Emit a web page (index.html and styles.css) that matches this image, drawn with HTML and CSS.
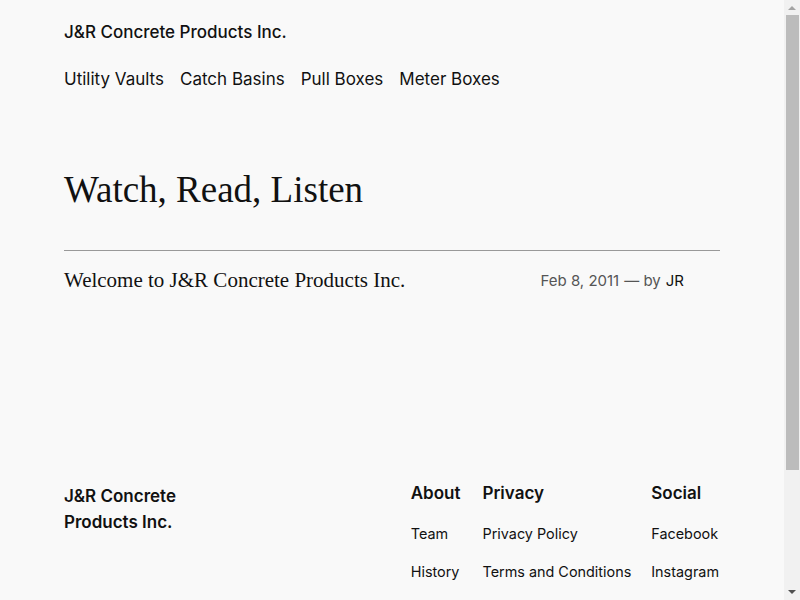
FILE: index.html
```
<!DOCTYPE html>
<html lang="en">
<head>
    <meta charset="UTF-8">
    <meta name="viewport" content="width=device-width, initial-scale=1.0">
    <title>Watch, Read, Listen – J&amp;R Concrete Products Inc.</title>
    <link rel="stylesheet" href="styles.css">
</head>
<body>
    <header class="site-header">
        <p class="site-title"><a href="#">J&amp;R Concrete Products Inc.</a></p>
        <nav class="site-nav">
            <ul>
                <li><a href="#">Utility Vaults</a></li>
                <li><a href="#">Catch Basins</a></li>
                <li><a href="#">Pull Boxes</a></li>
                <li><a href="#">Meter Boxes</a></li>
            </ul>
        </nav>
    </header>

    <main class="site-main">
        <h1 class="page-title">Watch, Read, Listen</h1>
        <hr class="divider">
        <article class="post-row">
            <h2 class="post-title"><a href="#">Welcome to J&amp;R Concrete Products Inc.</a></h2>
            <div class="post-meta">
                <span>Feb 8, 2011</span>
                <span>— by</span>
                <a href="#">JR</a>
            </div>
        </article>
    </main>

    <footer class="site-footer">
        <p class="footer-title"><a href="#">J&amp;R Concrete Products Inc.</a></p>
        <div class="footer-cols">
            <div class="footer-col">
                <h3>About</h3>
                <ul>
                    <li><a href="#">Team</a></li>
                    <li><a href="#">History</a></li>
                </ul>
            </div>
            <div class="footer-col">
                <h3>Privacy</h3>
                <ul>
                    <li><a href="#">Privacy Policy</a></li>
                    <li><a href="#">Terms and Conditions</a></li>
                </ul>
            </div>
            <div class="footer-col">
                <h3>Social</h3>
                <ul>
                    <li><a href="#">Facebook</a></li>
                    <li><a href="#">Instagram</a></li>
                </ul>
            </div>
        </div>
    </footer>

    <!-- window scrollbar, drawn since the capture hides the real one -->
    <div class="scrollbar" aria-hidden="true">
        <span class="scroll-arrow up"></span>
        <span class="scroll-thumb"></span>
        <span class="scroll-arrow down"></span>
    </div>
</body>
</html>
```

FILE: styles.css
```
body {
    margin: 0;
    padding-right: 16px;
    background: #f9f9f9;
    color: #111;
    font-family: Inter, "Noto Sans", sans-serif;
}
a {
    color: inherit;
    text-decoration: none;
}
ul {
    list-style: none;
    margin: 0;
    padding: 0;
}

/* header */
.site-header {
    padding: 20px 64px 0;
}
.site-title {
    margin: 0;
    font-size: 17px;
    font-weight: 500;
    line-height: 24px;
}
.site-nav {
    margin-top: 22px;
}
.site-nav ul {
    display: flex;
    gap: 16px;
}
.site-nav a {
    font-size: 17px;
    line-height: 27px;
}

/* main */
.site-main {
    padding: 0 64px;
}
.page-title {
    margin: 74px 0 0;
    font-family: "Liberation Serif", serif;
    font-weight: 400;
    font-size: 37px;
    line-height: 46px;
}
.divider {
    margin: 37px 0 0;
    border: 0;
    border-top: 1px solid #999;
}
.post-row {
    display: flex;
    align-items: center;
    justify-content: space-between;
    padding-top: 14px;
}
.post-title {
    margin: 0;
    font-family: "Liberation Serif", serif;
    font-weight: 400;
    font-size: 21px;
    line-height: 30px;
}
.post-meta {
    display: flex;
    gap: 5px;
    padding-right: 36px;
    font-size: 15px;
    color: #555;
}
.post-meta a {
    color: #111;
}

/* footer */
.site-footer {
    display: flex;
    justify-content: space-between;
    align-items: flex-start;
    padding: 188px 65px 186px 64px;
}
.footer-title {
    margin: 0;
    width: 130px;
    font-size: 17px;
    font-weight: 600;
    line-height: 26px;
}
.footer-cols {
    display: flex;
    gap: 20px;
}
.footer-col:first-child {
    margin-right: 2px;
}
.footer-col h3 {
    margin: 0;
    font-size: 17px;
    font-weight: 600;
    line-height: 20px;
}
.footer-col ul {
    margin-top: 20px;
    display: flex;
    flex-direction: column;
    gap: 17px;
}
.footer-col a {
    font-size: 14.4px;
    line-height: 21px;
}

/* scrollbar */
.scrollbar {
    position: fixed;
    top: 0;
    right: 0;
    width: 16px;
    height: 100%;
    background: #f1f1f1;
    display: flex;
    flex-direction: column;
    align-items: center;
}
.scroll-arrow {
    width: 0;
    height: 0;
    border-left: 4px solid transparent;
    border-right: 4px solid transparent;
}
.scroll-arrow.up {
    margin: 6px 0 5px;
    border-bottom: 4px solid #a3a3a3;
}
.scroll-arrow.down {
    margin: auto 0 6px;
    border-top: 4px solid #505050;
}
.scroll-thumb {
    width: 13px;
    height: 455px;
    background: #bcbcbc;
}
```
